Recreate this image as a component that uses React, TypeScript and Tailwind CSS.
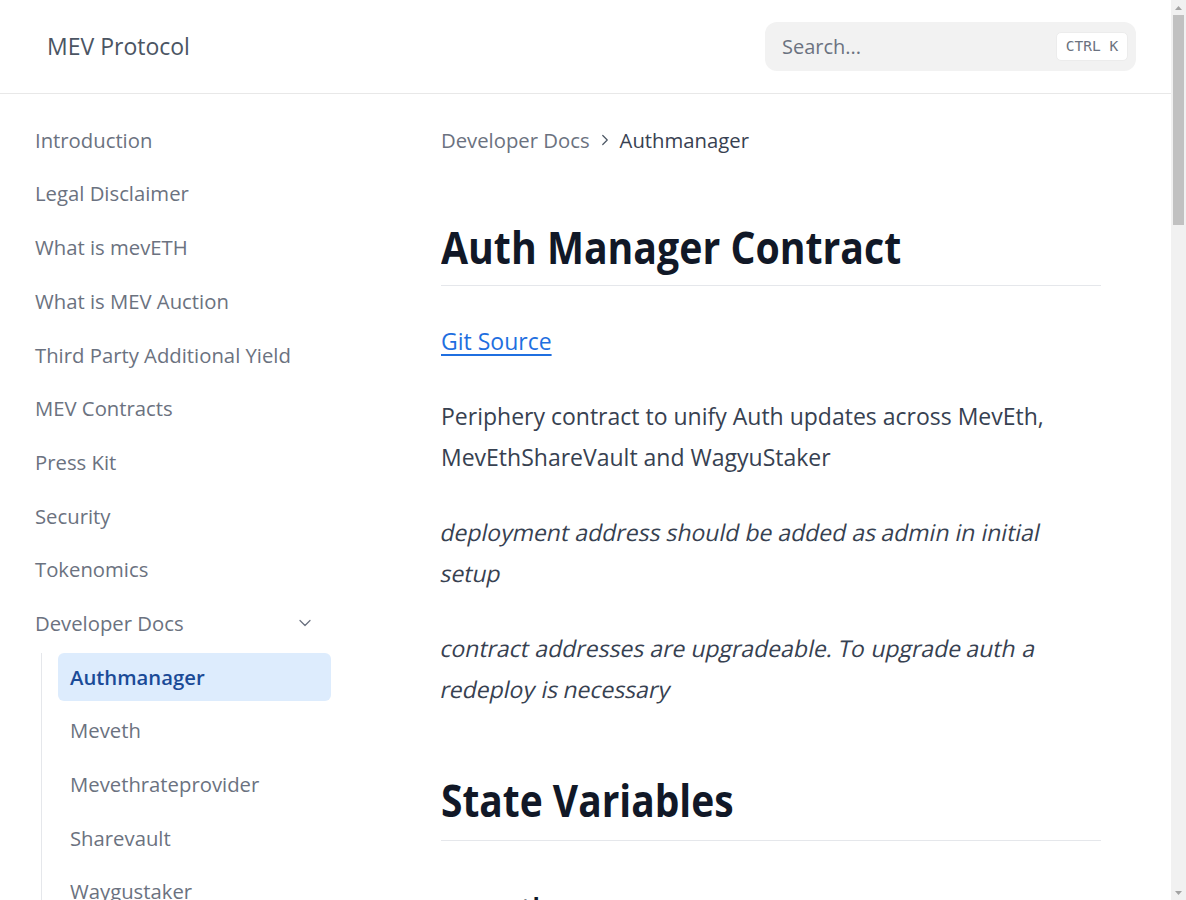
import { ChevronDown, ChevronRight } from "lucide-react";

const topItems = [
  "Introduction",
  "Legal Disclaimer",
  "What is mevETH",
  "What is MEV Auction",
  "Third Party Additional Yield",
  "MEV Contracts",
  "Press Kit",
  "Security",
  "Tokenomics",
];

const devDocs = [
  "Authmanager",
  "Meveth",
  "Mevethrateprovider",
  "Sharevault",
  "Waygustaker",
  "Interfaces",
  "Libraries",
];

// the docs render emphasis as slanted regular text, so slant word by word
function Slanted({ text }: { text: string }) {
  const words = text.split(" ");
  return (
    <>
      {words.map((w, i) => (
        <span key={i}>
          <span className="inline-block -skew-x-12">{w}</span>
          {i < words.length - 1 ? " " : ""}
        </span>
      ))}
    </>
  );
}

function Header() {
  return (
    <header className="flex h-[94px] shrink-0 items-center justify-between border-b border-[#e8e8e8] bg-white pl-[47px] pr-[35px]">
      <div className="text-[23px] text-[#4b5563]">MEV Protocol</div>
      <div className="flex h-[49px] w-[371px] items-center justify-between rounded-xl bg-[#f2f2f2] pl-[17px] pr-[8px]">
        <span className="text-[20px] text-[#6b7280]">Search...</span>
        <kbd className="flex h-[29px] w-[72px] items-center justify-center rounded-[5px] border border-[#ececec] bg-white font-['DejaVu_Sans_Mono',monospace] text-[14.5px] text-[#6b7280]">
          CTRL&nbsp;K
        </kbd>
      </div>
    </header>
  );
}

function Sidebar() {
  return (
    <aside className="w-[355px] shrink-0 pl-[23px] pr-[24px] pt-[22px]">
      <nav className="flex flex-col gap-[5.7px]">
        {topItems.map((t) => (
          <a key={t} className="flex h-[48px] items-center rounded-md px-3 text-[20.3px] text-[#6b7280]">
            {t}
          </a>
        ))}
        <a className="flex h-[48px] items-center justify-between rounded-md pl-3 pr-[16px] text-[20.3px] text-[#6b7280]">
          Developer Docs
          <ChevronDown className="h-[20px] w-[20px] text-[#6b7280]" strokeWidth={1.5} />
        </a>
        <div className="ml-[18px] flex flex-col gap-[5.7px] border-l border-[#e5e7eb] pl-[16px]">
          {devDocs.map((t, i) => (
            <a
              key={t}
              className={
                i === 0
                  ? "flex h-[48px] items-center rounded-md bg-[#ddecfd] px-3 text-[20.3px] font-semibold text-[#1a4a97]"
                  : "flex h-[48px] items-center rounded-md px-3 text-[20.3px] text-[#6b7280]"
              }
            >
              {t}
            </a>
          ))}
        </div>
      </nav>
    </aside>
  );
}

function Main() {
  return (
    <main className="box-content w-[660px] pl-[86px] pt-[31px]">
      <div className="flex items-center text-[20.3px] leading-[30px]">
        <span className="text-[#6b7280]">Developer Docs</span>
        <ChevronRight className="mx-[6px] h-[18px] w-[18px] text-[#4b5563]" strokeWidth={1.6} />
        <span className="text-[#374151]">Authmanager</span>
      </div>

      <h1 className="mt-[65px] border-b border-[#e5e7eb] pb-[11px] text-[45px] font-bold leading-[54px] text-[#111827]">
        <span className="inline-block origin-left scale-x-[0.872]">Auth Manager Contract</span>
      </h1>

      <div className="text-[23px] leading-[41px] text-[#374151]">
        <p className="mt-[35px]">
          <a className="text-[#1f6fe0] underline underline-offset-[4px]">Git Source</a>
        </p>
        <p className="mt-[34px]">
          Periphery contract to unify Auth updates across MevEth, MevEthShareVault and WagyuStaker
        </p>
        <p className="mt-[34px]">
          <Slanted text="deployment address should be added as admin in initial setup" />
        </p>
        <p className="mt-[34px]">
          <Slanted text="contract addresses are upgradeable. To upgrade auth a redeploy is necessary" />
        </p>
      </div>

      <h2 className="mt-[63px] border-b border-[#e5e7eb] pb-[13px] text-[45px] font-bold leading-[54px] text-[#111827]">
        <span className="inline-block origin-left scale-x-[0.865]">State Variables</span>
      </h2>

      <h3 className="mt-[48px] text-[30px] font-semibold leading-[40px] text-[#111827]">meveth</h3>
    </main>
  );
}

function Scrollbar() {
  return (
    <div className="flex w-[15px] shrink-0 flex-col items-center bg-[#f1f1f1]">
      <div className="flex h-[15px] w-full items-center justify-center">
        <svg width="7" height="4" viewBox="0 0 7 4">
          <path d="M3.5 0 L7 4 L0 4 Z" fill="#a3a3a3" />
        </svg>
      </div>
      <div className="h-[210px] w-[11px] bg-[#c1c1c1]" />
      <div className="flex-1" />
      <div className="flex h-[15px] w-full items-center justify-center">
        <svg width="7" height="4" viewBox="0 0 7 4">
          <path d="M0 0 L7 0 L3.5 4 Z" fill="#a3a3a3" />
        </svg>
      </div>
    </div>
  );
}

export default function App() {
  return (
    <div className="flex h-screen overflow-hidden bg-white font-['Open_Sans',sans-serif]">
      <div className="flex min-w-0 flex-1 flex-col overflow-hidden">
        <Header />
        <div className="flex">
          <Sidebar />
          <Main />
        </div>
      </div>
      <Scrollbar />
    </div>
  );
}
